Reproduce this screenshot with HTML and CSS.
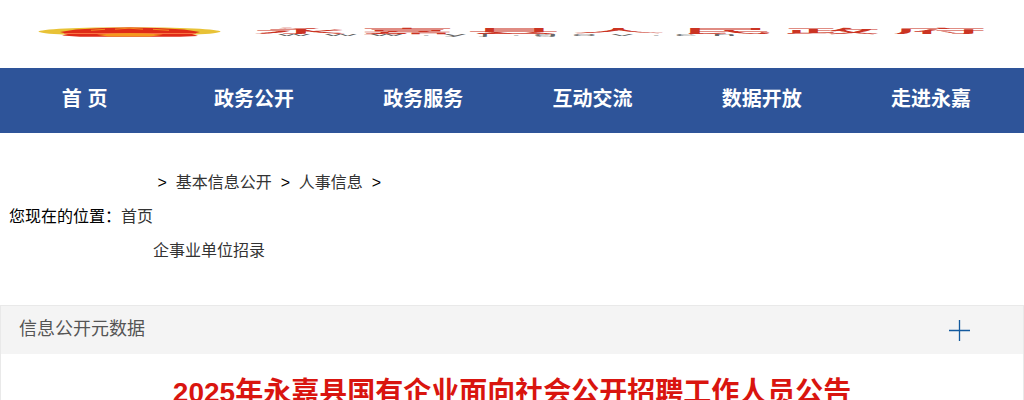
FILE: index.html
```html
<!DOCTYPE html>
<html lang="zh-CN">
<head>
    <meta charset="UTF-8">
    <meta name="viewport" content="width=device-width, initial-scale=1.0">
    <title>2025年永嘉县国有企业面向社会公开招聘工作人员公告</title>
    <link rel="stylesheet" href="styles.css">
</head>
<body>
    <div class="header">
        <svg class="logo" viewBox="0 0 1024 68" width="1024" height="68">
            <!-- emblem -->
            <ellipse cx="129.500" cy="31.600" rx="91" ry="4.400" fill="#e8c236"/>
            <path d="M60 32 L76 29.500 Q130 25.500 184 29.500 L200 32 L192 34 L198 36 L180 36.800 H80 L62 35.500 L68 34 Z" fill="#df2b18"/>
            <path d="M64 33.500 H196" stroke="#fa7443" stroke-width="1"/>
            <path d="M97 34.800 Q130 31 163 34.800 L150 36.600 H108 Z" fill="#f4991f"/>
            <path d="M91 30.300 L105 29.300 M115 29.200 L129 28.200 L143 29.200 M153 29.300 L169 30.300" stroke="#f48a22" stroke-width="1" fill="none"/>
            <!-- site name -->
            <text class="site-name" transform="translate(0 32.500) scale(4.850 .29)" x="52 74 95.900 117.700 140.100 161.700 183.700">永嘉县人民政府</text>
            <text class="site-url" transform="translate(0 35.800) scale(4 .25)" x="69.500 81.200 92.700 105 111 120 127.500 133.300 143 152.800 162.500 168.700 178">www.yj.gov.cn</text>
        </svg>
    </div>

    <div class="nav">
        <a href="#">首 页</a>
        <a href="#">政务公开</a>
        <a href="#">政务服务</a>
        <a href="#">互动交流</a>
        <a href="#">数据开放</a>
        <a href="#">走进永嘉</a>
    </div>

    <div class="position">
        <div class="position-home">您现在的位置：<a href="#">首页</a></div>
        <div class="position-path">
            <div>&nbsp;&gt;&nbsp; <a href="#">基本信息公开</a>&nbsp; &gt;&nbsp; <a href="#">人事信息</a>&nbsp; &gt;</div>
            <div><a href="#">企事业单位招录</a></div>
        </div>
    </div>

    <div class="article">
        <div class="meta">
            <span class="meta-title">信息公开元数据</span>
            <svg class="plus" viewBox="0 0 21 21" width="21" height="21">
                <path d="M10.500 0 V21 M0 10.500 H21" stroke="#135a9e" stroke-width="1.300"/>
            </svg>
        </div>
        <h1>2025年永嘉县国有企业面向社会公开招聘工作人员公告</h1>
    </div>
</body>
</html>
```
FILE: styles.css
```css
body {
    margin: 0;
    font-family: "Liberation Sans", "Noto Sans CJK SC", sans-serif;
    font-size: 16px;
    color: #000;
    background: #fff;
    overflow: hidden;
}
a {
    color: #333;
    text-decoration: none;
}
.header {
    height: 68px;
}
.logo {
    display: block;
}
.site-name {
    font-family: "Noto Sans CJK SC", sans-serif;
    font-size: 20px;
    font-weight: 500;
    fill: #cb3423;
}
.site-url {
    font-size: 11px;
    fill: #666;
}
.nav {
    display: flex;
    height: 65px;
    background: #2e5499;
}
.nav a {
    width: 16.53%;
    line-height: 62px;
    text-align: center;
    font-size: 20px;
    font-weight: bold;
    color: #fff;
}
.position {
    display: flex;
    align-items: center;
    height: 102px;
    margin: 33px 0 37px;
    padding-left: 9px;
    line-height: 34px;
}
.position-path {
    display: flex;
    flex-direction: column;
    gap: 34px;
}
.article {
    border: 1px solid #e9e9e9;
}
.meta {
    display: flex;
    align-items: center;
    justify-content: space-between;
    height: 48px;
    padding: 0 53px 0 18px;
    background: #f4f4f4;
    font-size: 18px;
    color: #555;
}
.meta-title {
    padding-bottom: 6px;
}
h1 {
    margin: 18px 0 0;
    text-align: center;
    font-size: 28px;
    line-height: 42px;
    color: #d9150f;
}
```
